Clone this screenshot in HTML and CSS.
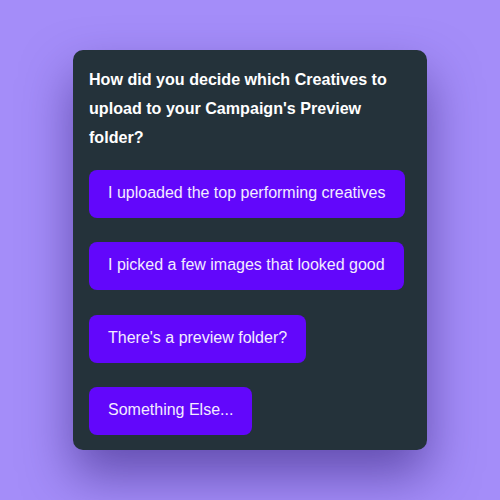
FILE: index.html
```html
<!DOCTYPE html>
<html>
<head>
<meta charset="utf-8">
<link rel="stylesheet" href="styles.css">
</head>
<body>
<div class="page">
  <div class="card">
    <p class="question">How did you decide which Creatives to upload to your Campaign's Preview folder?</p>
    <div class="options">
      <button class="option">I uploaded the top performing creatives</button>
      <button class="option">I picked a few images that looked good</button>
      <button class="option">There's a preview folder?</button>
      <button class="option">Something Else...</button>
    </div>
  </div>
</div>
</body>
</html>
```
FILE: styles.css
```css
html, body {
  margin: 0;
  padding: 0;
}
body {
  width: 500px;
  height: 500px;
  background: #a48df9;
  font-family: "Liberation Sans", Arial, sans-serif;
  overflow: hidden;
}
.page {
  padding-top: 50px;
  display: flex;
  justify-content: center;
}
.card {
  width: 354px;
  height: 400px;
  box-sizing: border-box;
  background: #24323a;
  border-radius: 10px;
  padding: 15px 16px 17px 16px;
  box-shadow: 0 25px 50px rgba(45, 25, 115, 0.55);
}
.question {
  margin: 0;
  color: #ffffff;
  font-weight: bold;
  font-size: 16.1px;
  line-height: 29px;
}
.options {
  margin-top: 17.5px;
  display: flex;
  flex-direction: column;
  align-items: flex-start;
  gap: 24.5px;
}
.option {
  border: none;
  margin: 0;
  background: #6207fb;
  color: #f3ecff;
  font-family: "Liberation Sans", Arial, sans-serif;
  font-size: 16px;
  line-height: 20px;
  padding: 13px 19px 15px 19px;
  border-radius: 8px;
  text-align: left;
}
```
